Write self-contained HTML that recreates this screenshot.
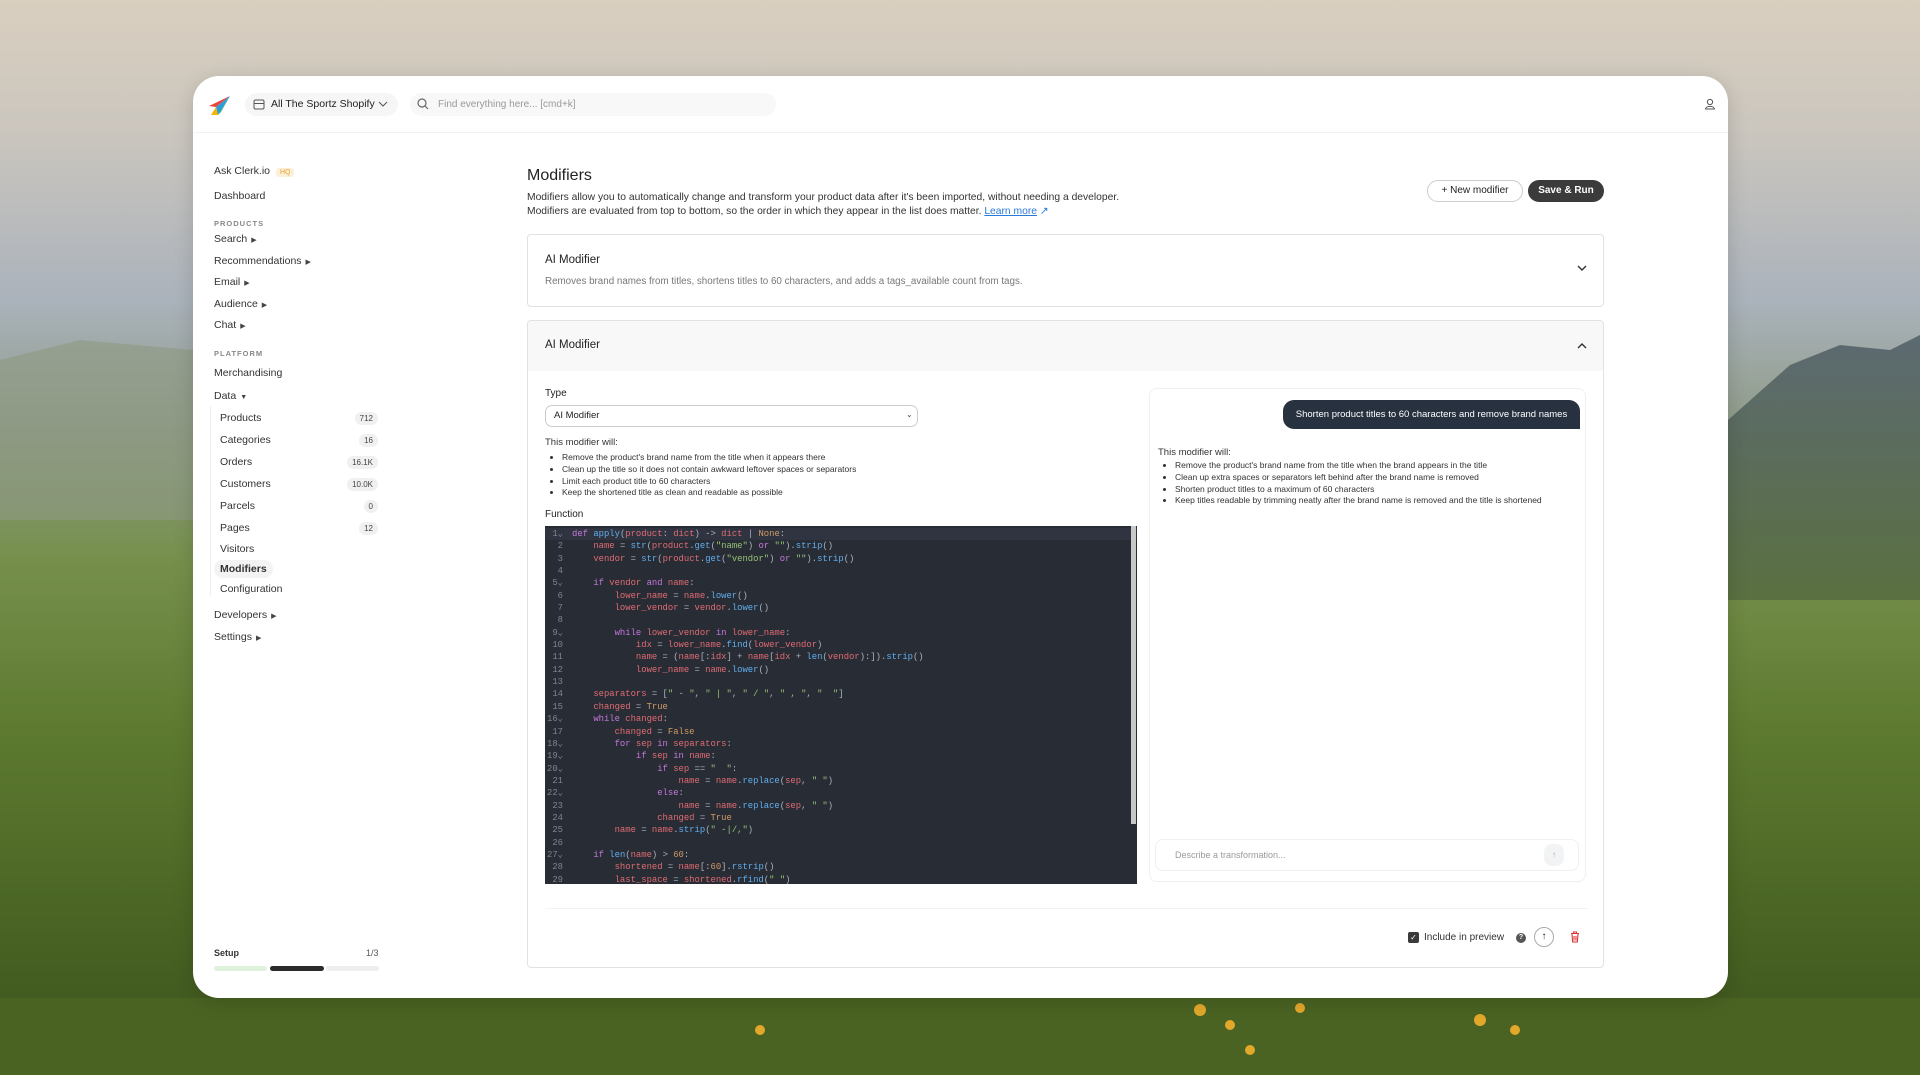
<!DOCTYPE html>
<html><head><meta charset="utf-8"><style>
*{box-sizing:border-box;margin:0;padding:0}
html,body{width:1920px;height:1075px;overflow:hidden}
body{font-family:"Liberation Sans",sans-serif;color:#222;position:relative;
background:linear-gradient(180deg,#d9cfbf 0%,#cbc6be 12%,#aab2bb 28%,#8e9a86 40%,#76904c 52%,#5d7a30 68%,#4a6524 85%,#3b521c 100%)}
.a{position:absolute}
#card{left:193px;top:76px;width:1535px;height:922px;background:#fff;border-radius:26px;overflow:hidden;box-shadow:0 4px 20px rgba(0,0,0,.15)}
.t{position:absolute;white-space:nowrap}
.side{font-size:10.5px;color:#333}
.sec{font-size:7.5px;letter-spacing:1px;color:#888;font-weight:bold}
.badge{position:absolute;right:0;font-size:8px;color:#444;background:#f0f0f0;border-radius:8px;padding:2px 5px}
.tri{font-size:7px;margin-left:4px;color:#444}
.code{font-family:"Liberation Mono","DejaVu Sans Mono",monospace;font-size:8.9px;line-height:12.35px;color:#abb2bf;white-space:pre}
.ln{color:#7f848e;display:inline-block;width:16px;text-align:right;margin-right:9px}
.k{color:#c678dd}.f{color:#61afef}.s{color:#98c379}.n{color:#d19a66}.v{color:#e06c75}.c{color:#56b6c2}
ul{padding-left:17px;font-size:8.5px;color:#333;line-height:11.8px}
</style></head><body>
<svg class="a" style="left:0;top:0" width="1920" height="1075">
<defs><linearGradient id="m" x1="0" y1="0" x2="0" y2="1"><stop offset="0" stop-color="#5c6a72"/><stop offset="1" stop-color="#5a7040"/></linearGradient></defs>
<polygon points="1728,420 1790,365 1840,345 1890,350 1920,335 1920,600 1728,600" fill="url(#m)"/>
<polygon points="0,360 80,340 193,350 193,520 0,520" fill="#8d9a82" opacity=".6"/>
<rect x="0" y="998" width="1920" height="77" fill="#4a6322"/>
<g fill="#e2a82a"><circle cx="760" cy="1030" r="5"/><circle cx="1200" cy="1010" r="6"/><circle cx="1230" cy="1025" r="5"/><circle cx="1300" cy="1008" r="5"/><circle cx="1480" cy="1020" r="6"/><circle cx="1515" cy="1030" r="5"/><circle cx="1250" cy="1050" r="5"/></g>
</svg>
<div id="card" class="a">
 <svg class="a" style="left:14px;top:20px" width="24" height="20" viewBox="0 0 24 20"><path d="M23 0 L2 10 L9 11Z" fill="#e8453c"/><path d="M23 0 L9 11 L11 19Z" fill="#2d9cdb"/><path d="M9 11 L4 19 L11 19Z" fill="#f5b400"/><path d="M23 0 L11 19 L14 16Z" fill="#3bb273"/></svg>
 <div class="a" style="left:52px;top:17px;width:153px;height:23px;background:#f6f6f6;border-radius:12px"></div>
 <svg class="a" style="left:60px;top:23px" width="12" height="11"><rect x="1" y="1" width="10" height="9" rx="1.5" fill="none" stroke="#555"/><line x1="1" y1="4.5" x2="11" y2="4.5" stroke="#555"/></svg>
 <div class="t" style="left:78px;top:22px;font-size:10.5px;color:#222">All The Sportz Shopify</div>
 <svg class="a" style="left:185px;top:25px" width="10" height="7"><path d="M1 1 L5 5 L9 1" fill="none" stroke="#555"/></svg>
 <div class="a" style="left:217px;top:17px;width:366px;height:23px;background:#f8f8f8;border-radius:12px"></div>
 <svg class="a" style="left:224px;top:22px" width="12" height="12"><circle cx="5" cy="5" r="4" fill="none" stroke="#666" stroke-width="1.2"/><line x1="8" y1="8" x2="11" y2="11" stroke="#666" stroke-width="1.2"/></svg>
 <div class="t" style="left:245px;top:23px;font-size:10px;color:#999">Find everything here... [cmd+k]</div>
 <svg class="a" style="left:1511px;top:22px" width="12" height="12"><circle cx="6" cy="4" r="2.6" fill="none" stroke="#555"/><path d="M1.5 11 C2 7.5 10 7.5 10.5 11Z" fill="none" stroke="#555"/></svg>
 <div class="a" style="left:0;top:56px;width:1535px;height:1px;background:#f2f2f2"></div>
 <div class="t side" style="left:21px;top:89px">Ask Clerk.io <span style="font-size:7px;color:#e9a13b;background:#fdf0d8;padding:1px 4px;border-radius:3px;margin-left:3px">HQ</span></div>
 <div class="t side" style="left:21px;top:114px">Dashboard</div>
 <div class="t sec" style="left:21px;top:143px">PRODUCTS</div>
 <div class="t side" style="left:21px;top:157px">Search<span class="tri">▶</span></div>
 <div class="t side" style="left:21px;top:179px">Recommendations<span class="tri">▶</span></div>
 <div class="t side" style="left:21px;top:200px">Email<span class="tri">▶</span></div>
 <div class="t side" style="left:21px;top:222px">Audience<span class="tri">▶</span></div>
 <div class="t side" style="left:21px;top:243px">Chat<span class="tri">▶</span></div>
 <div class="t sec" style="left:21px;top:273px">PLATFORM</div>
 <div class="t side" style="left:21px;top:291px">Merchandising</div>
 <div class="t side" style="left:21px;top:314px">Data<span class="tri">▼</span></div>
 <div class="a" style="left:17px;top:330px;width:1px;height:190px;background:#eee"></div>
 <div class="a" style="left:27px;top:330px;width:158px">
  <div class="t side" style="left:0;top:6px;width:158px">Products<span class="badge">712</span></div>
  <div class="t side" style="left:0;top:28px;width:158px">Categories<span class="badge">16</span></div>
  <div class="t side" style="left:0;top:50px;width:158px">Orders<span class="badge">16.1K</span></div>
  <div class="t side" style="left:0;top:72px;width:158px">Customers<span class="badge">10.0K</span></div>
  <div class="t side" style="left:0;top:94px;width:158px">Parcels<span class="badge">0</span></div>
  <div class="t side" style="left:0;top:116px;width:158px">Pages<span class="badge">12</span></div>
  <div class="t side" style="left:0;top:137px">Visitors</div>
  <div class="t side" style="left:-6px;top:154px;background:#f3f3f3;border-radius:9px;padding:3px 6px;font-weight:bold">Modifiers</div>
  <div class="t side" style="left:0;top:177px">Configuration</div>
 </div>
 <div class="t side" style="left:21px;top:533px">Developers<span class="tri">▶</span></div>
 <div class="t side" style="left:21px;top:555px">Settings<span class="tri">▶</span></div>
 <div class="t" style="left:21px;top:872px;font-size:9px;font-weight:bold;color:#333">Setup</div>
 <div class="t" style="left:173px;top:872px;font-size:9px;color:#555">1/3</div>
 <div class="a" style="left:21px;top:890px;width:53px;height:5px;border-radius:3px;background:#dff2dc"></div>
 <div class="a" style="left:77px;top:890px;width:54px;height:5px;border-radius:3px;background:#2b2b2b"></div>
 <div class="a" style="left:133px;top:890px;width:53px;height:5px;border-radius:3px;background:#eee"></div>
 <div class="t" style="left:334px;top:91px;font-size:16px;color:#222">Modifiers</div>
 <div class="t" style="left:334px;top:115px;font-size:10.3px;color:#333;line-height:13.5px">Modifiers allow you to automatically change and transform your product data after it's been imported, without needing a developer.<br>Modifiers are evaluated from top to bottom, so the order in which they appear in the list does matter. <span style="color:#2a7ad8;text-decoration:underline">Learn more</span><span style="color:#2a7ad8"> ↗</span></div>
 <div class="t" style="left:1234px;top:104px;height:22px;width:96px;border:1px solid #ccc;border-radius:11px;font-size:10px;line-height:20px;text-align:center;color:#222">+ New modifier</div>
 <div class="t" style="left:1335px;top:104px;height:22px;width:76px;background:#3b3b3b;border-radius:11px;font-size:10px;line-height:22px;text-align:center;color:#fff;font-weight:bold">Save &amp; Run</div>
 <div class="a" style="left:334px;top:158px;width:1077px;height:73px;border:1px solid #e2e2e2;border-radius:4px"></div>
 <div class="t" style="left:352px;top:178px;font-size:11.5px;color:#222">AI Modifier</div>
 <div class="t" style="left:352px;top:200px;font-size:9.8px;color:#777">Removes brand names from titles, shortens titles to 60 characters, and adds a tags_available count from tags.</div>
 <svg class="a" style="left:1384px;top:189px" width="10" height="7"><path d="M1 1 L5 5 L9 1" fill="none" stroke="#333" stroke-width="1.4"/></svg>
 <div class="a" style="left:334px;top:244px;width:1077px;height:648px;border:1px solid #e2e2e2;border-radius:4px;overflow:hidden">
  <div class="a" style="left:0;top:0;width:1077px;height:50px;background:#f8f8f8"></div>
 </div>
 <div class="t" style="left:352px;top:263px;font-size:11.5px;color:#222">AI Modifier</div>
 <svg class="a" style="left:1384px;top:266px" width="10" height="7"><path d="M1 6 L5 2 L9 6" fill="none" stroke="#333" stroke-width="1.4"/></svg>
 <div class="t" style="left:352px;top:312px;font-size:10px;color:#222">Type</div>
 <div class="a" style="left:352px;top:329px;width:373px;height:22px;border:1px solid #ccc;border-radius:7px"></div>
 <div class="t" style="left:361px;top:334px;font-size:9.5px;color:#222">AI Modifier</div>
 <div class="t" style="left:713px;top:334px;font-size:8px;color:#444">⌄</div>
 <div class="t" style="left:352px;top:361px;font-size:9.5px;color:#333">This modifier will:</div>
 <ul class="a" style="left:352px;top:376px;width:400px">
  <li>Remove the product's brand name from the title when it appears there</li>
  <li>Clean up the title so it does not contain awkward leftover spaces or separators</li>
  <li>Limit each product title to 60 characters</li>
  <li>Keep the shortened title as clean and readable as possible</li>
 </ul>
 <div class="t" style="left:352px;top:433px;font-size:10px;color:#222">Function</div>
 <div class="a" style="left:352px;top:450px;width:592px;height:358px;background:#282c34;overflow:hidden;padding-top:3px">
  <div class="a" style="left:0;top:2px;width:592px;height:12px;background:#2f3440"></div>
  <div class="a" style="left:586px;top:0;width:5px;height:298px;background:#c8c8c8"></div>
<div class="code a" style="left:2px;top:2px"><span class="ln">1⌄</span><span class="k">def</span> <span class="f">apply</span>(<span class="v">product</span>: <span class="v">dict</span>) -&gt; <span class="v">dict</span> | <span class="n">None</span>:
<span class="ln">2</span>    <span class="v">name</span> = <span class="f">str</span>(<span class="v">product</span>.<span class="f">get</span>(<span class="s">"name"</span>) <span class="k">or</span> <span class="s">""</span>).<span class="f">strip</span>()
<span class="ln">3</span>    <span class="v">vendor</span> = <span class="f">str</span>(<span class="v">product</span>.<span class="f">get</span>(<span class="s">"vendor"</span>) <span class="k">or</span> <span class="s">""</span>).<span class="f">strip</span>()
<span class="ln">4</span>
<span class="ln">5⌄</span>    <span class="k">if</span> <span class="v">vendor</span> <span class="k">and</span> <span class="v">name</span>:
<span class="ln">6</span>        <span class="v">lower_name</span> = <span class="v">name</span>.<span class="f">lower</span>()
<span class="ln">7</span>        <span class="v">lower_vendor</span> = <span class="v">vendor</span>.<span class="f">lower</span>()
<span class="ln">8</span>
<span class="ln">9⌄</span>        <span class="k">while</span> <span class="v">lower_vendor</span> <span class="k">in</span> <span class="v">lower_name</span>:
<span class="ln">10</span>            <span class="v">idx</span> = <span class="v">lower_name</span>.<span class="f">find</span>(<span class="v">lower_vendor</span>)
<span class="ln">11</span>            <span class="v">name</span> = (<span class="v">name</span>[:<span class="v">idx</span>] + <span class="v">name</span>[<span class="v">idx</span> + <span class="f">len</span>(<span class="v">vendor</span>):]).<span class="f">strip</span>()
<span class="ln">12</span>            <span class="v">lower_name</span> = <span class="v">name</span>.<span class="f">lower</span>()
<span class="ln">13</span>
<span class="ln">14</span>    <span class="v">separators</span> = [<span class="s">" - "</span>, <span class="s">" | "</span>, <span class="s">" / "</span>, <span class="s">" , "</span>, <span class="s">"  "</span>]
<span class="ln">15</span>    <span class="v">changed</span> = <span class="n">True</span>
<span class="ln">16⌄</span>    <span class="k">while</span> <span class="v">changed</span>:
<span class="ln">17</span>        <span class="v">changed</span> = <span class="n">False</span>
<span class="ln">18⌄</span>        <span class="k">for</span> <span class="v">sep</span> <span class="k">in</span> <span class="v">separators</span>:
<span class="ln">19⌄</span>            <span class="k">if</span> <span class="v">sep</span> <span class="k">in</span> <span class="v">name</span>:
<span class="ln">20⌄</span>                <span class="k">if</span> <span class="v">sep</span> == <span class="s">"  "</span>:
<span class="ln">21</span>                    <span class="v">name</span> = <span class="v">name</span>.<span class="f">replace</span>(<span class="v">sep</span>, <span class="s">" "</span>)
<span class="ln">22⌄</span>                <span class="k">else</span>:
<span class="ln">23</span>                    <span class="v">name</span> = <span class="v">name</span>.<span class="f">replace</span>(<span class="v">sep</span>, <span class="s">" "</span>)
<span class="ln">24</span>                <span class="v">changed</span> = <span class="n">True</span>
<span class="ln">25</span>        <span class="v">name</span> = <span class="v">name</span>.<span class="f">strip</span>(<span class="s">" -|/,"</span>)
<span class="ln">26</span>
<span class="ln">27⌄</span>    <span class="k">if</span> <span class="f">len</span>(<span class="v">name</span>) &gt; <span class="n">60</span>:
<span class="ln">28</span>        <span class="v">shortened</span> = <span class="v">name</span>[:<span class="n">60</span>].<span class="f">rstrip</span>()
<span class="ln">29</span>        <span class="v">last_space</span> = <span class="v">shortened</span>.<span class="f">rfind</span>(<span class="s">" "</span>)</div>
 </div>
 <div class="a" style="left:956px;top:312px;width:437px;height:494px;border:1px solid #f0f0f0;border-radius:8px"></div>
 <div class="t" style="left:1090px;top:324px;width:297px;height:29px;background:#283140;border-radius:11px 11px 0 11px;color:#fff;font-size:9.5px;line-height:29px;text-align:center">Shorten product titles to 60 characters and remove brand names</div>
 <div class="t" style="left:965px;top:371px;font-size:9.5px;color:#333">This modifier will:</div>
 <ul class="a" style="left:965px;top:384px;width:398px;white-space:normal">
  <li>Remove the product's brand name from the title when the brand appears in the title</li>
  <li>Clean up extra spaces or separators left behind after the brand name is removed</li>
  <li>Shorten product titles to a maximum of 60 characters</li>
  <li>Keep titles readable by trimming neatly after the brand name is removed and the title is shortened</li>
 </ul>
 <div class="a" style="left:962px;top:763px;width:424px;height:32px;border:1px solid #f0f0f0;border-radius:8px"></div>
 <div class="t" style="left:982px;top:774px;font-size:9px;color:#999">Describe a transformation...</div>
 <div class="a" style="left:1351px;top:768px;width:20px;height:22px;background:#f2f3f5;border-radius:8px;font-size:8px;color:#aaa;text-align:center;line-height:22px">↑</div>
 <div class="a" style="left:352px;top:832px;width:1043px;height:1px;background:#f2f2f2"></div>
 <div class="a" style="left:1215px;top:856px;width:11px;height:11px;background:#3a3a3a;border-radius:2px;color:#fff;font-size:8px;line-height:11px;text-align:center">✓</div>
 <div class="t" style="left:1231px;top:856px;font-size:10px;color:#333">Include in preview</div>
 <div class="a" style="left:1323px;top:857px;width:10px;height:10px;border-radius:50%;background:#555;color:#fff;font-size:7px;line-height:10px;text-align:center;font-weight:bold">?</div>
 <div class="a" style="left:1341px;top:851px;width:20px;height:20px;border:1px solid #aaa;border-radius:50%;font-size:10px;line-height:18px;text-align:center;color:#222;font-weight:bold">↑</div>
 <svg class="a" style="left:1377px;top:855px" width="10" height="12"><path d="M1 2.5 H9 M3.5 2.5 V1 H6.5 V2.5 M2 3 L2.6 11 H7.4 L8 3 M4 5 V9.5 M6 5 V9.5" fill="none" stroke="#d33" stroke-width="1.1"/></svg>
</div>
</body></html>
